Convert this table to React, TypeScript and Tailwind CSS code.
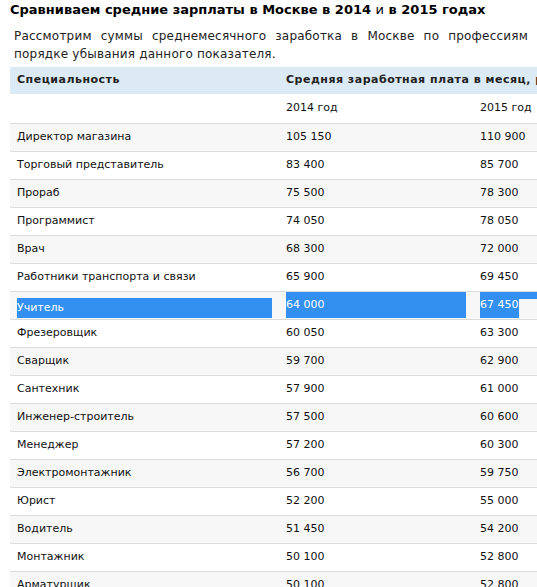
const rows: [string, string, string][] = [
  ['Директор магазина', '105 150', '110 900'],
  ['Торговый представитель', '83 400', '85 700'],
  ['Прораб', '75 500', '78 300'],
  ['Программист', '74 050', '78 050'],
  ['Врач', '68 300', '72 000'],
  ['Работники транспорта и связи', '65 900', '69 450'],
  ['Учитель', '64 000', '67 450'],
  ['Фрезеровщик', '60 050', '63 300'],
  ['Сварщик', '59 700', '62 900'],
  ['Сантехник', '57 900', '61 000'],
  ['Инженер-строитель', '57 500', '60 600'],
  ['Менеджер', '57 200', '60 300'],
  ['Электромонтажник', '56 700', '59 750'],
  ['Юрист', '52 200', '55 000'],
  ['Водитель', '51 450', '54 200'],
  ['Монтажник', '50 100', '52 800'],
  ['Арматурщик', '50 100', '52 800'],
];

const font = "font-['DejaVu_Sans',Verdana,sans-serif]";

function SelectedRow({ name, a, b }: { name: string; a: string; b: string }) {
  // row shown with a text selection across it
  return (
    <div className="flex h-[28px] border-t border-[#dcdcdc] bg-[#f7f7f7] text-white">
      <div className="w-[269px] px-[7px] pt-[6px]">
        <div className="flex h-[20px] items-center bg-[#3390f0]">{name}</div>
      </div>
      <div className="w-[194px] px-[7px]">
        <div className="flex h-[26px] items-center bg-[#3390f0]">{a}</div>
      </div>
      <div className="flex flex-1 pl-[7px]">
        <div className="flex h-[26px] items-center bg-[#3390f0]">{b}</div>
        <div className="h-[7px] flex-1 bg-[#3390f0]" />
      </div>
    </div>
  );
}

export default function App() {
  return (
    <div className={`h-[587px] w-[537px] overflow-hidden bg-white ${font}`}>
      <div className="w-[680px] pl-[10px]">
        <h2 className="pt-[1px] text-[13px] font-bold leading-[18px] text-black">
          Сравниваем средние зарплаты в Москве в 2014 <span className="font-normal">и</span> в 2015 годах
        </h2>
        <div className="mt-[8px] pl-[4px] text-[12px] leading-[18px] tracking-[0.2px] text-[#222]">
          <div className="whitespace-nowrap [word-spacing:5px]">
            Рассмотрим суммы среднемесячного заработка в Москве по профессиям (в рублях), расположив
          </div>
          <div>порядке убывания данного показателя.</div>
        </div>

        <div className="mt-[4px] text-[11px] text-[#111]">
          <div className="flex h-[27px] items-center bg-[#dbeaf4] font-bold tracking-[0.5px] text-[#222]">
            <div className="w-[269px] px-[7px]">Специальность</div>
            <div className="flex-1 whitespace-nowrap px-[7px]">Средняя заработная плата в месяц, руб.</div>
          </div>
          <div className="flex h-[29px] items-center">
            <div className="w-[269px] px-[7px]" />
            <div className="w-[194px] px-[7px]">2014 год</div>
            <div className="flex-1 px-[7px]">2015 год</div>
          </div>
          {rows.map(([name, a, b], i) =>
            name === 'Учитель' ? (
              <SelectedRow key={name} name={name} a={a} b={b} />
            ) : (
              <div
                key={name}
                className={`flex h-[28px] items-center border-t border-[#dcdcdc] ${
                  i % 2 === 0 ? 'bg-[#f7f7f7]' : 'bg-white'
                }`}
              >
                <div className="w-[269px] px-[7px]">{name}</div>
                <div className="w-[194px] px-[7px]">{a}</div>
                <div className="flex-1 px-[7px]">{b}</div>
              </div>
            )
          )}
        </div>
      </div>
    </div>
  );
}
